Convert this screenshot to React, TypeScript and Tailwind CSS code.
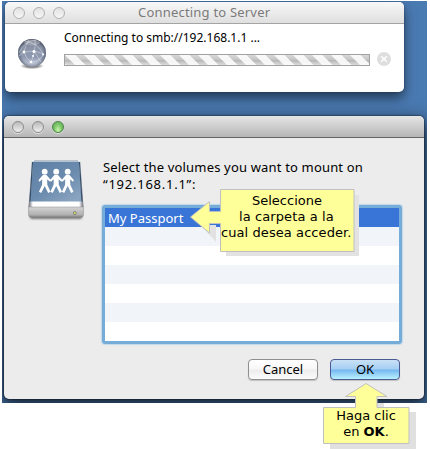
import type { ReactNode } from "react";

function Light({ green = false }: { green?: boolean }) {
  return (
    <span
      className={
        green
          ? "size-3 rounded-full border border-[#4a8446] bg-radial-[at_50%_85%] from-[#c9f7ae] via-[#7fc86c] to-[#5da456] shadow-[0_1px_0_#ffffff80]"
          : "size-3 rounded-full border border-[#8c8c8c] bg-linear-to-b from-[#b9b9b9] to-[#efefef] shadow-[0_1px_0_#ffffff80]"
      }
    />
  );
}

function PaleLight() {
  return <span className="size-3 rounded-full border border-[#b0b0b0] bg-linear-to-b from-[#e2e2e2] to-[#f6f6f6]" />;
}

function Globe() {
  return (
    <svg width="32" height="34" viewBox="0 1 32 34" className="block">
      <defs>
        <linearGradient id="globe" x1="0" y1="0" x2="0" y2="1">
          <stop offset="0" stopColor="#596072" />
          <stop offset="0.3" stopColor="#8b94a8" />
          <stop offset="0.65" stopColor="#8e99b0" />
          <stop offset="1" stopColor="#d3dae7" />
        </linearGradient>
        <radialGradient id="globeEdge">
          <stop offset="0.75" stopColor="#30374a" stopOpacity="0" />
          <stop offset="1" stopColor="#30374a" stopOpacity="0.5" />
        </radialGradient>
        <radialGradient id="globeShade">
          <stop offset="0.3" stopColor="#000" stopOpacity="0.6" />
          <stop offset="1" stopColor="#000" stopOpacity="0" />
        </radialGradient>
      </defs>
      <ellipse cx="16" cy="29" rx="12" ry="3.2" fill="url(#globeShade)" />
      <circle cx="16" cy="16" r="14" fill="url(#globe)" />
      <circle cx="16" cy="16" r="14" fill="url(#globeEdge)" />
      <ellipse cx="16" cy="5.5" rx="8" ry="3" fill="#fff" opacity="0.28" />
      <g fill="none" stroke="#f3f6fb" strokeWidth="0.6" opacity="0.65">
        <path d="M3 16Q8 4 20 3M9 4Q22 6 28 18M8 15Q9 9 13 3M8 15L18 14L28 17M18 14Q20 8 19 3M8 15Q10 22 15 25M18 14Q18 20 15 25M18 14L25 25M15 25Q23 25 28 17M3 19L8 15" />
      </g>
      <g fill="#fff">
        <circle cx="8" cy="15" r="1.4" />
        <circle cx="18" cy="14.5" r="1.5" />
        <circle cx="15" cy="25" r="1.3" />
        <circle cx="27" cy="17.5" r="1" />
        <circle cx="17" cy="19" r="1" />
      </g>
    </svg>
  );
}

function Person({ x }: { x: number }) {
  return (
    <g transform={`translate(${x} 0)`}>
      <circle cx="0" cy="12.7" r="2.9" />
      <path d="M-1.8 16H1.800L6.300 21.300L5.200 22.700L2.500 20.300L2.600 25.800L5.800 32.700L3.500 33.900L0 27L-3.500 33.900L-5.800 32.700L-2.600 25.800L-2.500 20.300L-5.200 22.700L-6.300 21.300Z" />
    </g>
  );
}

function Drive() {
  return (
    <svg width="60" height="64" viewBox="0 0 60 64" className="block">
      <defs>
        <linearGradient id="top" x1="0" y1="0" x2="0.8" y2="1">
          <stop offset="0" stopColor="#5d7fa5" />
          <stop offset="0.6" stopColor="#6c8cae" />
          <stop offset="1" stopColor="#8aa4c0" />
        </linearGradient>
        <linearGradient id="front" x1="0" y1="0" x2="0" y2="1">
          <stop offset="0" stopColor="#d4d4d4" />
          <stop offset="0.75" stopColor="#b0b0b0" />
          <stop offset="1" stopColor="#777777" />
        </linearGradient>
        <linearGradient id="edge" x1="0" y1="0" x2="1" y2="0">
          <stop offset="0" stopColor="#667" />
          <stop offset="0.08" stopColor="#fff" />
          <stop offset="0.92" stopColor="#fff" />
          <stop offset="1" stopColor="#667" />
        </linearGradient>
        <filter id="soft" x="-20%" y="-100%" width="140%" height="300%">
          <feGaussianBlur stdDeviation="1" />
        </filter>
      </defs>
      <rect x="4" y="55" width="52" height="5" rx="2" fill="#777" filter="url(#soft)" />
      <path d="M8 1H52Q54 1 54.300 3L57.500 48H2.500L6 3Q6.200 1 8 1Z" fill="url(#edge)" />
      <path d="M8 1.500H52" stroke="#bbc1c8" />
      <path d="M7 2.500H53L55.500 42.500H4.500Z" fill="url(#top)" />
      <path d="M6.500 3L4 42.500M53.500 3L56 42.500" stroke="#35506c" strokeWidth="1.200" />
      <path d="M2.500 48H57.500V55.500Q57.500 58.500 54.500 58.500H5.500Q2.500 58.500 2.500 55.500Z" fill="url(#front)" stroke="#8a8a8a" strokeWidth="0.500" />
      <circle cx="48.800" cy="54" r="1.700" fill="#666" />
      <circle cx="48.800" cy="54" r="1.100" fill="#e5e85b" />
      <g fill="#fff">
        <Person x={18.700} />
        <Person x={30.200} />
        <Person x={41.700} />
      </g>
    </svg>
  );
}

function PushButton({ children, primary = false }: { children: ReactNode; primary?: boolean }) {
  return (
    <button
      className={
        primary
          ? "h-[21px] w-[70px] rounded-[4px] border border-[#4a5b94] bg-[linear-gradient(#c9e1f6_0%,#a5cff3_48%,#74b6ee_52%,#b9f2ff_100%)] text-[13px] leading-[19px] shadow-[0_1px_1px_#00000030]"
          : "h-[21px] w-[70px] rounded-[4px] border border-[#8f8f8f] bg-[linear-gradient(#ffffff_0%,#f7f7f7_48%,#ececec_52%,#fcfcfc_100%)] text-[13px] leading-[19px] shadow-[0_1px_1px_#00000030]"
      }
    >
      {children}
    </button>
  );
}

const emptyRows = [0, 1, 2, 3, 4, 5];

export default function App() {
  return (
    <div className="relative h-[449px] w-[430px] overflow-hidden bg-white font-['Noto_Sans','Open_Sans',sans-serif] text-black">
      <div className="absolute top-px left-[2px] h-[402px] w-[425px] overflow-hidden bg-[#4a7ab2]">
        <section className="absolute top-px left-[3px] flex h-[90px] w-[399px] flex-col overflow-hidden rounded-[5px] bg-white shadow-[0_6px_12px_#00000085,0_0_2px_#00000060]">
          <header className="flex h-[22px] shrink-0 items-center gap-2 border-b border-[#a4a4a4] bg-linear-to-b from-[#f8f8f8] to-[#dfdfdf] pl-2">
            <PaleLight />
            <PaleLight />
            <PaleLight />
            <h1 className="ml-[65px] text-[13px] tracking-[0.2px] whitespace-nowrap text-[#7b7b7b]">Connecting to Server</h1>
          </header>
          <div className="flex pt-[14px] pl-[11px]">
            <Globe />
            <div className="ml-4 w-[306px]">
              <p className="-mt-[10px] text-[12px] leading-[20px] whitespace-nowrap">Connecting to smb://192.168.1.1 ...</p>
              <div className="mt-[6px] h-3 overflow-hidden border border-[#a2a2a2]">
                <svg width="304" height="10" className="block">
                  <defs>
                    <linearGradient id="gloss" x1="0" y1="0" x2="0" y2="1">
                      <stop offset="0" stopColor="#fff" stopOpacity="0.45" />
                      <stop offset="0.45" stopColor="#fff" stopOpacity="0.2" />
                      <stop offset="0.55" stopColor="#fff" stopOpacity="0" />
                      <stop offset="1" stopColor="#fff" stopOpacity="0.5" />
                    </linearGradient>
                    <pattern id="stripes" width="19" height="10" patternUnits="userSpaceOnUse">
                      <rect width="19" height="10" fill="#f5f5f5" />
                      <path d="M-8.500 0H0L10 10H1.500ZM10.500 0H19L29 10H20.500Z" fill="#b8b8b8" />
                    </pattern>
                  </defs>
                  <rect width="304" height="10" fill="url(#stripes)" />
                  <rect width="304" height="10" fill="url(#gloss)" />
                </svg>
              </div>
            </div>
            <svg width="14" height="14" viewBox="0 0 14 14" className="mt-[14px] ml-[7px]">
              <circle cx="7" cy="7" r="7" fill="#dedede" />
              <path d="M4.200 4.200L9.800 9.800M9.800 4.200L4.200 9.800" stroke="#fff" strokeWidth="1.500" />
            </svg>
          </div>
        </section>

        <section className="absolute top-[115px] left-[2px] flex h-[283px] w-[420px] flex-col overflow-hidden rounded-[5px] bg-[#ececec] shadow-[0_8px_18px_4px_#000000a0,0_0_2px_#000000]">
          <header className="flex h-[22px] shrink-0 items-center gap-2 border-b border-[#656565] bg-linear-to-b from-[#e6e6e6] to-[#b6b6b6] pl-2">
            <Light />
            <Light />
            <Light green />
          </header>
          <div className="flex">
            <div className="pt-[21px] pl-[22px]">
              <Drive />
            </div>
            <div className="ml-4 pt-[21px]">
              <p className="pl-px text-[13px] leading-[17px] tracking-[0.17px] whitespace-nowrap">
                Select the volumes you want to mount on
                <br />
                <span className="tracking-[0.75px]">“192.168.1.1”:</span>
              </p>
              <div className="mt-3 w-[300px] rounded-[3px] border-[3px] border-[#76acd8] shadow-[0_0_1px_1px_#c4d9ea]">
                <div className="h-[19px] bg-[#3875d7] pl-[3px] text-[13px] leading-[20px] text-white">My Passport</div>
                {emptyRows.map((row) => (
                  <div key={row} className="h-[19px] odd:bg-white even:bg-[#f1f5fa]" />
                ))}
              </div>
            </div>
          </div>
          <div className="mt-[15px] flex justify-end gap-3 pr-6">
            <PushButton>Cancel</PushButton>
            <PushButton primary>OK</PushButton>
          </div>
        </section>
      </div>

      <div className="absolute top-[188px] left-[189px] h-[70px] w-[171px]">
        <svg width="171" height="70" className="absolute inset-0">
          <path d="M37 7H170V68H37ZM18 37H27V54L14 40Z" fill="#e2e2e2" />
          <path d="M31.500 1.500H165V63.500H31.500V35.500H20.500V45L1.500 29L20.500 13.500V23.500H31.500Z" fill="#ffff99" stroke="#c0c0c0" />
        </svg>
        <p className="relative w-[163px] pt-[5px] pl-8 font-['DejaVu_Sans',sans-serif] text-[13px] leading-4 whitespace-nowrap">
          <span className="block pl-[31px]">Seleccione</span>
          <span className="block pl-[18px] tracking-[0.1px]">la carpeta a la</span>
          <span className="block tracking-[0.08px]">cual desea acceder.</span>
        </p>
      </div>

      <div className="absolute top-[382px] left-[323px] h-[67px] w-[94px]">
        <svg width="94" height="67" className="absolute inset-0">
          <path d="M7 30H93V67H7ZM40 21H61V30H40Z" fill="#e0e0e0" />
          <path d="M.5 25.500H32.500V14.500H22.500L43 1.500L64 14.500H54V25.500H86V61.500H.5Z" fill="#ffff99" stroke="#c0c0c0" />
        </svg>
        <p className="relative w-[86px] pt-[26px] text-center font-['DejaVu_Sans',sans-serif] text-[13px] leading-4 whitespace-nowrap">
          Haga clic
          <br />
          en <b>OK</b>.
        </p>
      </div>
    </div>
  );
}
